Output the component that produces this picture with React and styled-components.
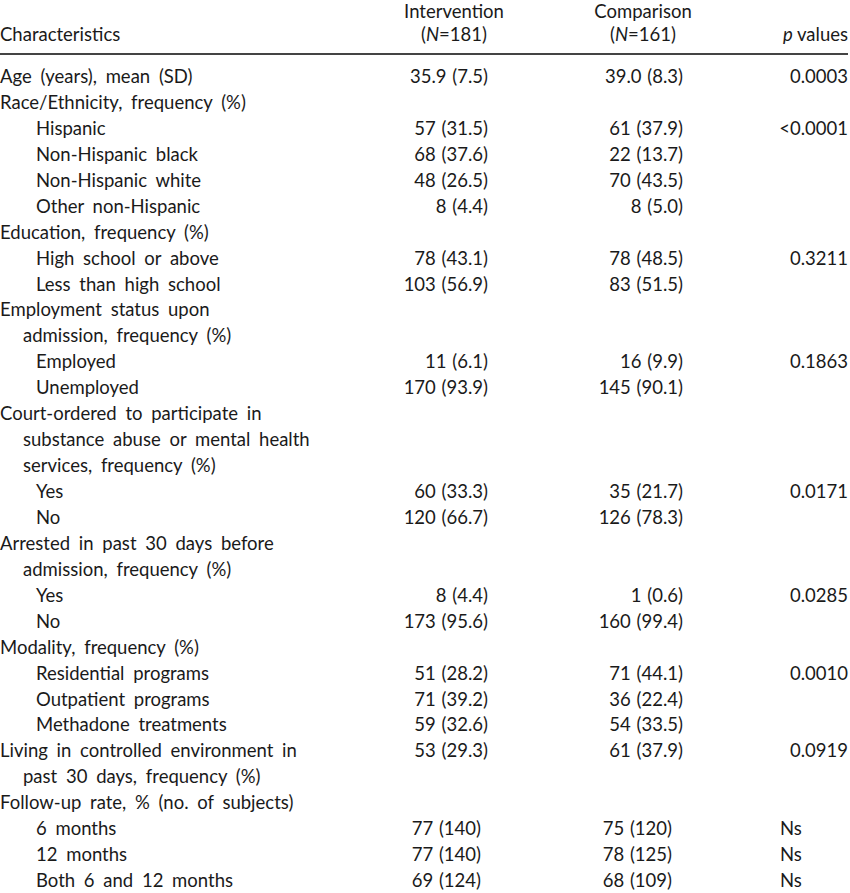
import styled, { createGlobalStyle } from 'styled-components';

const GlobalStyle = createGlobalStyle`
  body {
    margin: 0;
    background: #fff;
    color: #1a1a1a;
    font-family: Lato, "Liberation Sans", sans-serif;
    font-size: 18.5px;
  }
`;

const Table = styled.div`
  width: 848px;
  padding-bottom: 4px;
`;

const Header = styled.div`
  display: grid;
  grid-template-columns: 400px 108px 80px 110px 1fr;
  align-items: end;
  line-height: 23px;
  padding-bottom: 7px;
  border-bottom: 2px solid #444;
`;

const HeadCell = styled.div`
  text-align: ${(p) => p.align || 'center'};
  grid-column: ${(p) => p.col};
  white-space: nowrap;
  word-spacing: ${(p) => (p.align === 'left' ? 3 : 0)}px;
`;

const Body = styled.div`
  padding-top: 9px;
`;

const Row = styled.div`
  display: grid;
  grid-template-columns: 380px 108px 195px 165px;
  line-height: 25.94px;
  white-space: nowrap;
`;

const Label = styled.div`
  padding-left: ${(p) => (p.sub ? 36 : 0)}px;
  word-spacing: 4px;
`;

const LabelLine = styled.div`
  padding-left: ${(p) => (p.cont ? 23 : 0)}px;
`;

const Value = styled.div`
  text-align: ${(p) => (p.left ? 'left' : 'right')};
  padding-right: ${(p) => p.pr || 0}px;
  padding-left: ${(p) => p.pl || 0}px;
  word-spacing: 1px;
`;

const rows = [
  { label: ['Age (years), mean (SD)'], a: '35.9 (7.5)', b: '39.0 (8.3)', p: '0.0003' },
  { label: ['Race/Ethnicity, frequency (%)'] },
  { label: ['Hispanic'], sub: true, a: '57 (31.5)', b: '61 (37.9)', p: '<0.0001' },
  { label: ['Non-Hispanic black'], sub: true, a: '68 (37.6)', b: '22 (13.7)' },
  { label: ['Non-Hispanic white'], sub: true, a: '48 (26.5)', b: '70 (43.5)' },
  { label: ['Other non-Hispanic'], sub: true, a: '8 (4.4)', b: '8 (5.0)' },
  { label: ['Education, frequency (%)'] },
  { label: ['High school or above'], sub: true, a: '78 (43.1)', b: '78 (48.5)', p: '0.3211' },
  { label: ['Less than high school'], sub: true, a: '103 (56.9)', b: '83 (51.5)' },
  { label: ['Employment status upon', 'admission, frequency (%)'] },
  { label: ['Employed'], sub: true, a: '11 (6.1)', b: '16 (9.9)', p: '0.1863' },
  { label: ['Unemployed'], sub: true, a: '170 (93.9)', b: '145 (90.1)' },
  {
    label: [
      'Court-ordered to participate in',
      'substance abuse or mental health',
      'services, frequency (%)',
    ],
  },
  { label: ['Yes'], sub: true, a: '60 (33.3)', b: '35 (21.7)', p: '0.0171' },
  { label: ['No'], sub: true, a: '120 (66.7)', b: '126 (78.3)' },
  { label: ['Arrested in past 30 days before', 'admission, frequency (%)'] },
  { label: ['Yes'], sub: true, a: '8 (4.4)', b: '1 (0.6)', p: '0.0285' },
  { label: ['No'], sub: true, a: '173 (95.6)', b: '160 (99.4)' },
  { label: ['Modality, frequency (%)'] },
  { label: ['Residential programs'], sub: true, a: '51 (28.2)', b: '71 (44.1)', p: '0.0010' },
  { label: ['Outpatient programs'], sub: true, a: '71 (39.2)', b: '36 (22.4)' },
  { label: ['Methadone treatments'], sub: true, a: '59 (32.6)', b: '54 (33.5)' },
  {
    label: ['Living in controlled environment in', 'past 30 days, frequency (%)'],
    a: '53 (29.3)',
    b: '61 (37.9)',
    p: '0.0919',
  },
  { label: ['Follow-up rate, % (no. of subjects)'] },
  { label: ['6 months'], sub: true, rate: true, a: '77 (140)', b: '75 (120)', p: 'Ns' },
  { label: ['12 months'], sub: true, rate: true, a: '77 (140)', b: '78 (125)', p: 'Ns' },
  { label: ['Both 6 and 12 months'], sub: true, rate: true, a: '69 (124)', b: '68 (109)', p: 'Ns' },
];

export default function App() {
  return (
    <>
      <GlobalStyle />
      <Table>
        <Header>
          <HeadCell col="1" align="left">Characteristics</HeadCell>
          <HeadCell col="2">
            Intervention
            <br />
            (<i>N</i>=181)
          </HeadCell>
          <HeadCell col="4">
            Comparison
            <br />
            (<i>N</i>=161)
          </HeadCell>
          <HeadCell col="5" align="right">
            <i>p</i> values
          </HeadCell>
        </Header>
        <Body>
          {rows.map((r, i) => (
            <Row key={i}>
              <Label sub={r.sub}>
                {r.label.map((line, j) => (
                  <LabelLine key={j} cont={j > 0}>
                    {line}
                  </LabelLine>
                ))}
              </Label>
              <Value pr={r.rate ? 7 : 0}>{r.a}</Value>
              <Value pr={r.rate ? 11 : 0}>{r.b}</Value>
              <Value left={r.rate} pl={r.rate ? 97 : 0}>
                {r.p}
              </Value>
            </Row>
          ))}
        </Body>
      </Table>
    </>
  );
}
